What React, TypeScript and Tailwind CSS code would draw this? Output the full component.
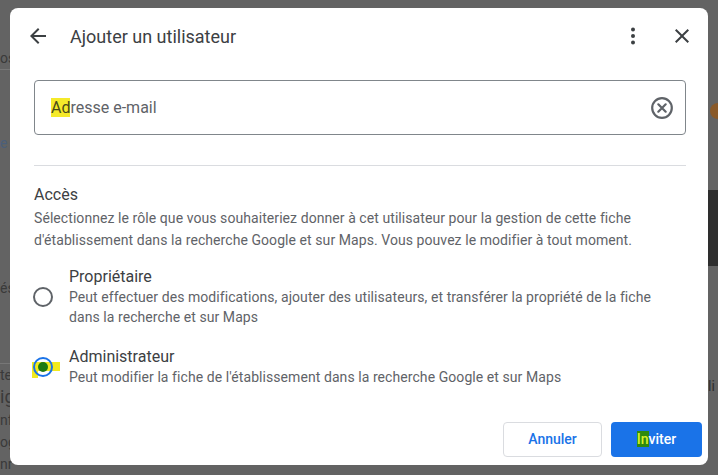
import React from 'react';

function BackArrow() {
  return (
    <svg width="24" height="24" viewBox="0 0 24 24" fill="#3c4043">
      <path d="M20 11H7.83l5.59-5.59L12 4l-8 8 8 8 1.41-1.41L7.83 13H20v-2z" />
    </svg>
  );
}

function Kebab() {
  return (
    <svg width="24" height="24" viewBox="0 0 24 24" fill="#3c4043">
      <circle cx="12" cy="5.5" r="2" />
      <circle cx="12" cy="12" r="2" />
      <circle cx="12" cy="18.5" r="2" />
    </svg>
  );
}

function Close() {
  return (
    <svg width="24" height="24" viewBox="0 0 24 24" fill="#3c4043">
      <path d="M19 6.41L17.59 5 12 10.59 6.41 5 5 6.41 10.59 12 5 17.59 6.41 19 12 13.41 17.59 19 19 17.59 13.41 12z" />
    </svg>
  );
}

function ClearCircle() {
  return (
    <svg width="24" height="24" viewBox="0 0 24 24" fill="none" stroke="#5f6368" strokeWidth="2.2">
      <circle cx="12" cy="12" r="9.8" />
      <path d="M8.3 8.3l7.4 7.4M15.7 8.3l-7.4 7.4" strokeLinecap="round" />
    </svg>
  );
}

function RadioOff() {
  return (
    <svg width="22" height="22" viewBox="0 0 22 22">
      <circle cx="11" cy="11" r="9" fill="none" stroke="#5f6368" strokeWidth="2" />
    </svg>
  );
}

function RadioOn() {
  return (
    <svg width="28" height="22" viewBox="0 0 28 22">
      <rect x="0" y="6" width="28" height="9" fill="#f2ea1e" />
      <rect x="0" y="6" width="6" height="16" fill="#f2ea1e" />
      <circle cx="11" cy="11" r="9" fill="none" stroke="#1a73e8" strokeWidth="2" />
      <circle cx="11" cy="11" r="5" fill="#1e7a14" />
    </svg>
  );
}

function Role({ title, desc, checked }: { title: string; desc: React.ReactNode; checked?: boolean }) {
  return (
    <div className="flex items-center">
      <div className="w-[37px] shrink-0 -ml-[2px]">{checked ? <RadioOn /> : <RadioOff />}</div>
      <div>
        <div className="text-[16px] leading-5 text-[#3c4043]">{title}</div>
        <div className="text-[14px] leading-5 tracking-[0.07px] text-[#5f6368]">{desc}</div>
      </div>
    </div>
  );
}

export default function App() {
  return (
    <div
      className="relative w-[718px] h-[475px] overflow-hidden bg-[#636363]"
      style={{ fontFamily: 'Roboto, "Noto Sans", Arial, sans-serif' }}
    >
      {/* page behind the overlay, dimmed */}
      <div className="absolute inset-0 flex justify-between text-[14px] text-[#3a3a3a]">
        <div className="w-[10px] flex flex-col">
          <div className="pt-[48px] h-[77px] border-b border-[#777]">os</div>
          <div className="pt-[63px] text-[#4b5f7a]">e</div>
          <div className="pt-[124px] h-[345px] border-b border-[#777]">és</div>
          <div className="leading-[22px]">
            te<br /><span className="text-[18px]">ig</span><br />nf<br />og<br />nr
          </div>
        </div>
        <div className="w-[10px] flex flex-col items-start">
          <div className="mt-[103px] ml-[2px] w-[16px] h-[16px] rounded-full bg-[#8a5a2a]" />
          <div className="mt-[71px] w-[10px] h-[76px] bg-[#2e2e2e]" />
          <div className="mt-[110px] text-[#2e2e2e]">li</div>
        </div>
      </div>

      {/* dialog */}
      <div className="absolute left-[10px] top-[8px] w-[698px] h-[457px] rounded-lg bg-white flex flex-col">
        <div className="h-[56px] flex items-center pl-[16px] pr-[14px]">
          <BackArrow />
          <div className="ml-[20px] text-[18px] text-[#3c4043] flex-1">Ajouter un utilisateur</div>
          <Kebab />
          <div className="ml-[25px]">
            <Close />
          </div>
        </div>

        <div className="pl-6 pr-[22px] pt-4">
          <div className="h-[55px] border border-[#80868b] rounded flex items-center pl-4 pr-[11px]">
            <div className="flex-1 text-[16px] text-[#5f6368]">
              <span className="bg-[#f5ea2a] text-[#4a4a1a]">Ad</span>resse e-mail
            </div>
            <ClearCircle />
          </div>

          <div className="mt-[30px] h-px bg-[#dadce0]" />

          <div className="mt-[17px] text-[16px] leading-6 text-[#3c4043]">Accès</div>
          <div className="text-[14px] leading-[22px] tracking-[0.07px] text-[#5f6368]">
            Sélectionnez le rôle que vous souhaiteriez donner à cet utilisateur pour la gestion de cette fiche
            <br />
            d'établissement dans la recherche Google et sur Maps. Vous pouvez le modifier à tout moment.
          </div>

          <div className="mt-[16px] flex flex-col gap-[20px]">
            <Role
              title="Propriétaire"
              desc={
                <>
                  Peut effectuer des modifications, ajouter des utilisateurs, et transférer la propriété de la fiche
                  <br />
                  dans la recherche et sur Maps
                </>
              }
            />
            <Role
              checked
              title="Administrateur"
              desc="Peut modifier la fiche de l'établissement dans la recherche Google et sur Maps"
            />
          </div>
        </div>

        <div className="mt-auto flex justify-end gap-[9px] pr-[6px] pb-[8px]">
          <button className="w-[99px] h-[35px] rounded border border-[#dadce0] bg-white text-[14px] font-medium text-[#1a73e8]">
            Annuler
          </button>
          <button className="w-[91px] h-[35px] rounded bg-[#1a73e8] text-[14px] font-medium text-white">
            <span className="bg-[#2f8a0c] text-[#d8ef2a]">In</span>viter
          </button>
        </div>
      </div>
    </div>
  );
}
